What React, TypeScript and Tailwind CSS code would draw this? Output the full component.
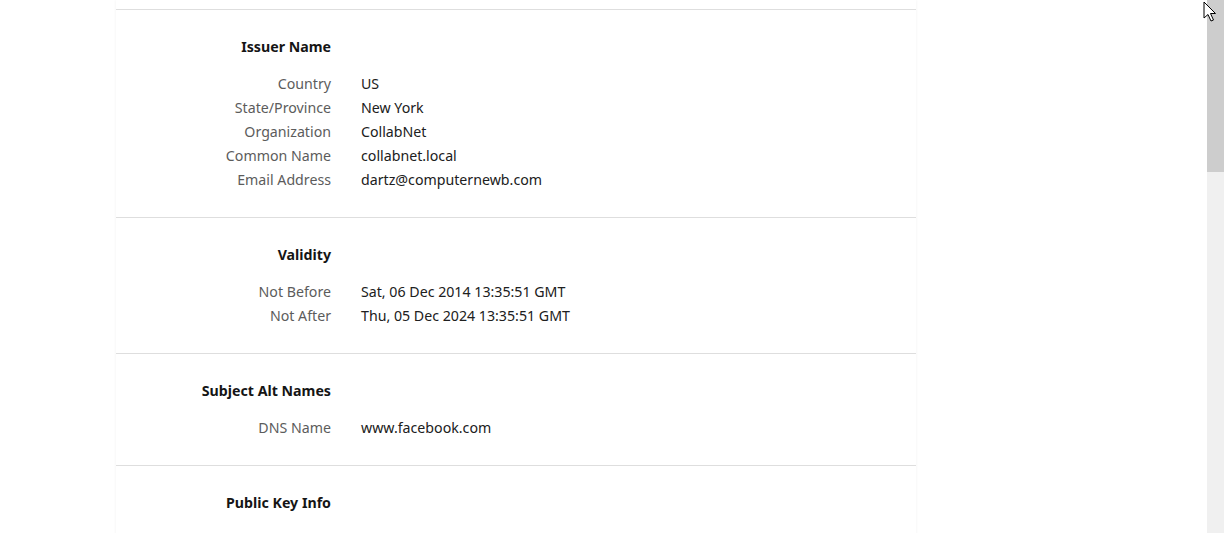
import React from 'react'

type Row = [string, string]

const sections: { title: string; rows: Row[] }[] = [
    {
        title: 'Issuer Name',
        rows: [
            ['Country', 'US'],
            ['State/Province', 'New York'],
            ['Organization', 'CollabNet'],
            ['Common Name', 'collabnet.local'],
            ['Email Address', 'dartz@computernewb.com'],
        ],
    },
    {
        title: 'Validity',
        rows: [
            ['Not Before', 'Sat, 06 Dec 2014 13:35:51 GMT'],
            ['Not After', 'Thu, 05 Dec 2024 13:35:51 GMT'],
        ],
    },
    {
        title: 'Subject Alt Names',
        rows: [['DNS Name', 'www.facebook.com']],
    },
    {
        title: 'Public Key Info',
        rows: [],
    },
]

function Section({ title, rows }: { title: string; rows: Row[] }) {
    return (
        <div className='border-t border-[#dedede] pt-[25px] pb-[25px] last:pb-0'>
            <div className='flex h-[24px] items-center'>
                <div className='w-[215px] text-right font-bold text-[#151515]'>{title}</div>
            </div>
            {rows.length > 0 && <div className='mt-[13px]'>
                {rows.map(([k, v]) => (
                    <div key={k} className='flex h-[24px] items-center'>
                        <div className='w-[215px] text-right text-[#5c5c5c]'>{k}</div>
                        <div className='ml-[30px] text-[#202020]'>{v}</div>
                    </div>
                ))}
            </div>}
        </div>
    )
}

export default function App() {
    return (
        <div className='relative flex h-[533px] overflow-hidden bg-white text-[14.2px] font-["Noto_Sans",sans-serif]'>
            <div className='flex-1'>
                <div className='ml-[116px] h-[600px] w-[800px] bg-white pt-[9px] shadow-[0_0_3px_rgba(0,0,0,0.06)]'>
                    {sections.map(s => <Section key={s.title} {...s} />)}
                </div>
            </div>
            <div className='w-[17px] bg-[#f0f0f0]'>
                <div className='h-[172px] bg-[#cdcdcd]' />
            </div>
            <svg className='absolute left-[1203px] top-[1px]' width='14' height='22' viewBox='0 0 14 22'>
                <path d='M1 1 L1 17 L5 13.5 L8 20 L10.5 19 L7.5 12.5 L12.5 12.5 Z' fill='white' stroke='black' strokeWidth='1' strokeLinejoin='round' />
            </svg>
        </div>
    )
}
